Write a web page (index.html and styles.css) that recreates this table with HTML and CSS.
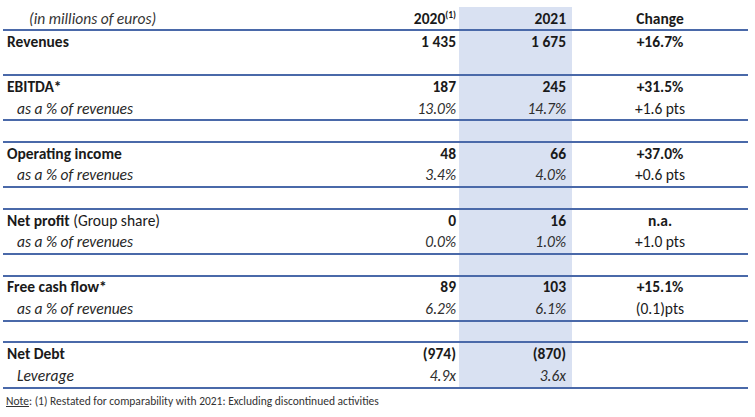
FILE: index.html
```html
<!DOCTYPE html>
<html lang="en">
<head>
<meta charset="utf-8">
<title>Key figures</title>
<link rel="stylesheet" href="styles.css">
</head>
<body>
<table class="fig">
  <colgroup>
    <col class="c-label">
    <col class="c-y1">
    <col class="c-y2">
    <col class="c-chg">
  </colgroup>
  <thead>
    <tr class="head">
      <th class="unit">(in millions of euros)</th>
      <th class="num">2020<sup>(1)</sup></th>
      <th class="num hl">2021</th>
      <th class="chg">Change</th>
    </tr>
  </thead>
  <tbody>
    <tr class="r">
      <td class="lbl">Revenues</td><td class="num b">1 435</td><td class="num b hl">1 675</td><td class="chg b">+16.7%</td>
    </tr>
    <tr class="r end">
      <td></td><td></td><td class="hl"></td><td></td>
    </tr>
    <tr class="r">
      <td class="lbl">EBITDA*</td><td class="num b">187</td><td class="num b hl">245</td><td class="chg b">+31.5%</td>
    </tr>
    <tr class="r end">
      <td class="sub">as a % of revenues</td><td class="num it">13.0%</td><td class="num it hl">14.7%</td><td class="chg">+1.6 pts</td>
    </tr>
    <tr class="gap end"><td></td><td></td><td class="hl"></td><td></td></tr>
    <tr class="r">
      <td class="lbl">Operating income</td><td class="num b">48</td><td class="num b hl">66</td><td class="chg b">+37.0%</td>
    </tr>
    <tr class="r end">
      <td class="sub">as a % of revenues</td><td class="num it">3.4%</td><td class="num it hl">4.0%</td><td class="chg">+0.6 pts</td>
    </tr>
    <tr class="gap end"><td></td><td></td><td class="hl"></td><td></td></tr>
    <tr class="r">
      <td class="lbl">Net profit <span class="reg">(Group share)</span></td><td class="num b">0</td><td class="num b hl">16</td><td class="chg b">n.a.</td>
    </tr>
    <tr class="r end">
      <td class="sub">as a % of revenues</td><td class="num it">0.0%</td><td class="num it hl">1.0%</td><td class="chg">+1.0 pts</td>
    </tr>
    <tr class="gap end"><td></td><td></td><td class="hl"></td><td></td></tr>
    <tr class="r">
      <td class="lbl">Free cash flow*</td><td class="num b">89</td><td class="num b hl">103</td><td class="chg b">+15.1%</td>
    </tr>
    <tr class="r end">
      <td class="sub">as a % of revenues</td><td class="num it">6.2%</td><td class="num it hl">6.1%</td><td class="chg">(0.1)pts</td>
    </tr>
    <tr class="gap end"><td></td><td></td><td class="hl"></td><td></td></tr>
    <tr class="r">
      <td class="lbl">Net Debt</td><td class="num b">(974)</td><td class="num b hl">(870)</td><td class="chg"></td>
    </tr>
    <tr class="r end">
      <td class="sub">Leverage</td><td class="num it">4.9x</td><td class="num it hl">3.6x</td><td class="chg"></td>
    </tr>
  </tbody>
</table>
<p class="note"><u>Note</u>: (1) Restated for comparability with 2021: Excluding discontinued activities</p>
</body>
</html>
```

FILE: styles.css
```css
html, body {
  margin: 0;
  padding: 0;
  background: #ffffff;
}

body {
  font-family: Carlito, Calibri, Lato, "Liberation Sans", sans-serif;
  font-size: 15.5px;
  color: #1a1a1a;
  padding: 7px 0 0 3px;
}

.fig {
  border-collapse: collapse;
  table-layout: fixed;
  width: 745px;
}

.c-label { width: 300px; }
.c-y1 { width: 156px; }
.c-y2 { width: 113px; }
.c-chg { width: 176px; }

.fig th,
.fig td {
  padding: 0;
  white-space: nowrap;
  line-height: 16px;
}

.head th {
  height: 23px;
  vertical-align: bottom;
  padding-bottom: 2px;
  box-sizing: border-box;
  border-bottom: 2px solid #4a69a9;
}

.head .unit {
  text-align: left;
  font-style: italic;
  font-weight: normal;
  padding-left: 26px;
  color: #333333;
}

.head .num,
.head .chg {
  font-weight: bold;
}

sup {
  font-size: 9.5px;
  line-height: 0;
  vertical-align: 6px;
}

.r td {
  height: 21.6px;
  vertical-align: middle;
}

.gap td {
  height: 19.6px;
}

.end td {
  border-bottom: 2px solid #4a69a9;
}

.num {
  text-align: right;
  padding-right: 3px !important;
}

.hl {
  background: #d9e1f2;
}

.num.hl {
  padding-right: 6px !important;
}

.chg {
  text-align: center;
}

.lbl {
  font-weight: bold;
  padding-left: 4px !important;
}

.lbl .reg {
  font-weight: normal;
}

.sub {
  font-style: italic;
  padding-left: 14px !important;
  color: #262626;
}

.b {
  font-weight: bold;
}

.it {
  font-style: italic;
  color: #2e2e2e;
}

.note {
  margin: 5px 0 0 3px;
  font-size: 11.5px;
  color: #333333;
}
```
